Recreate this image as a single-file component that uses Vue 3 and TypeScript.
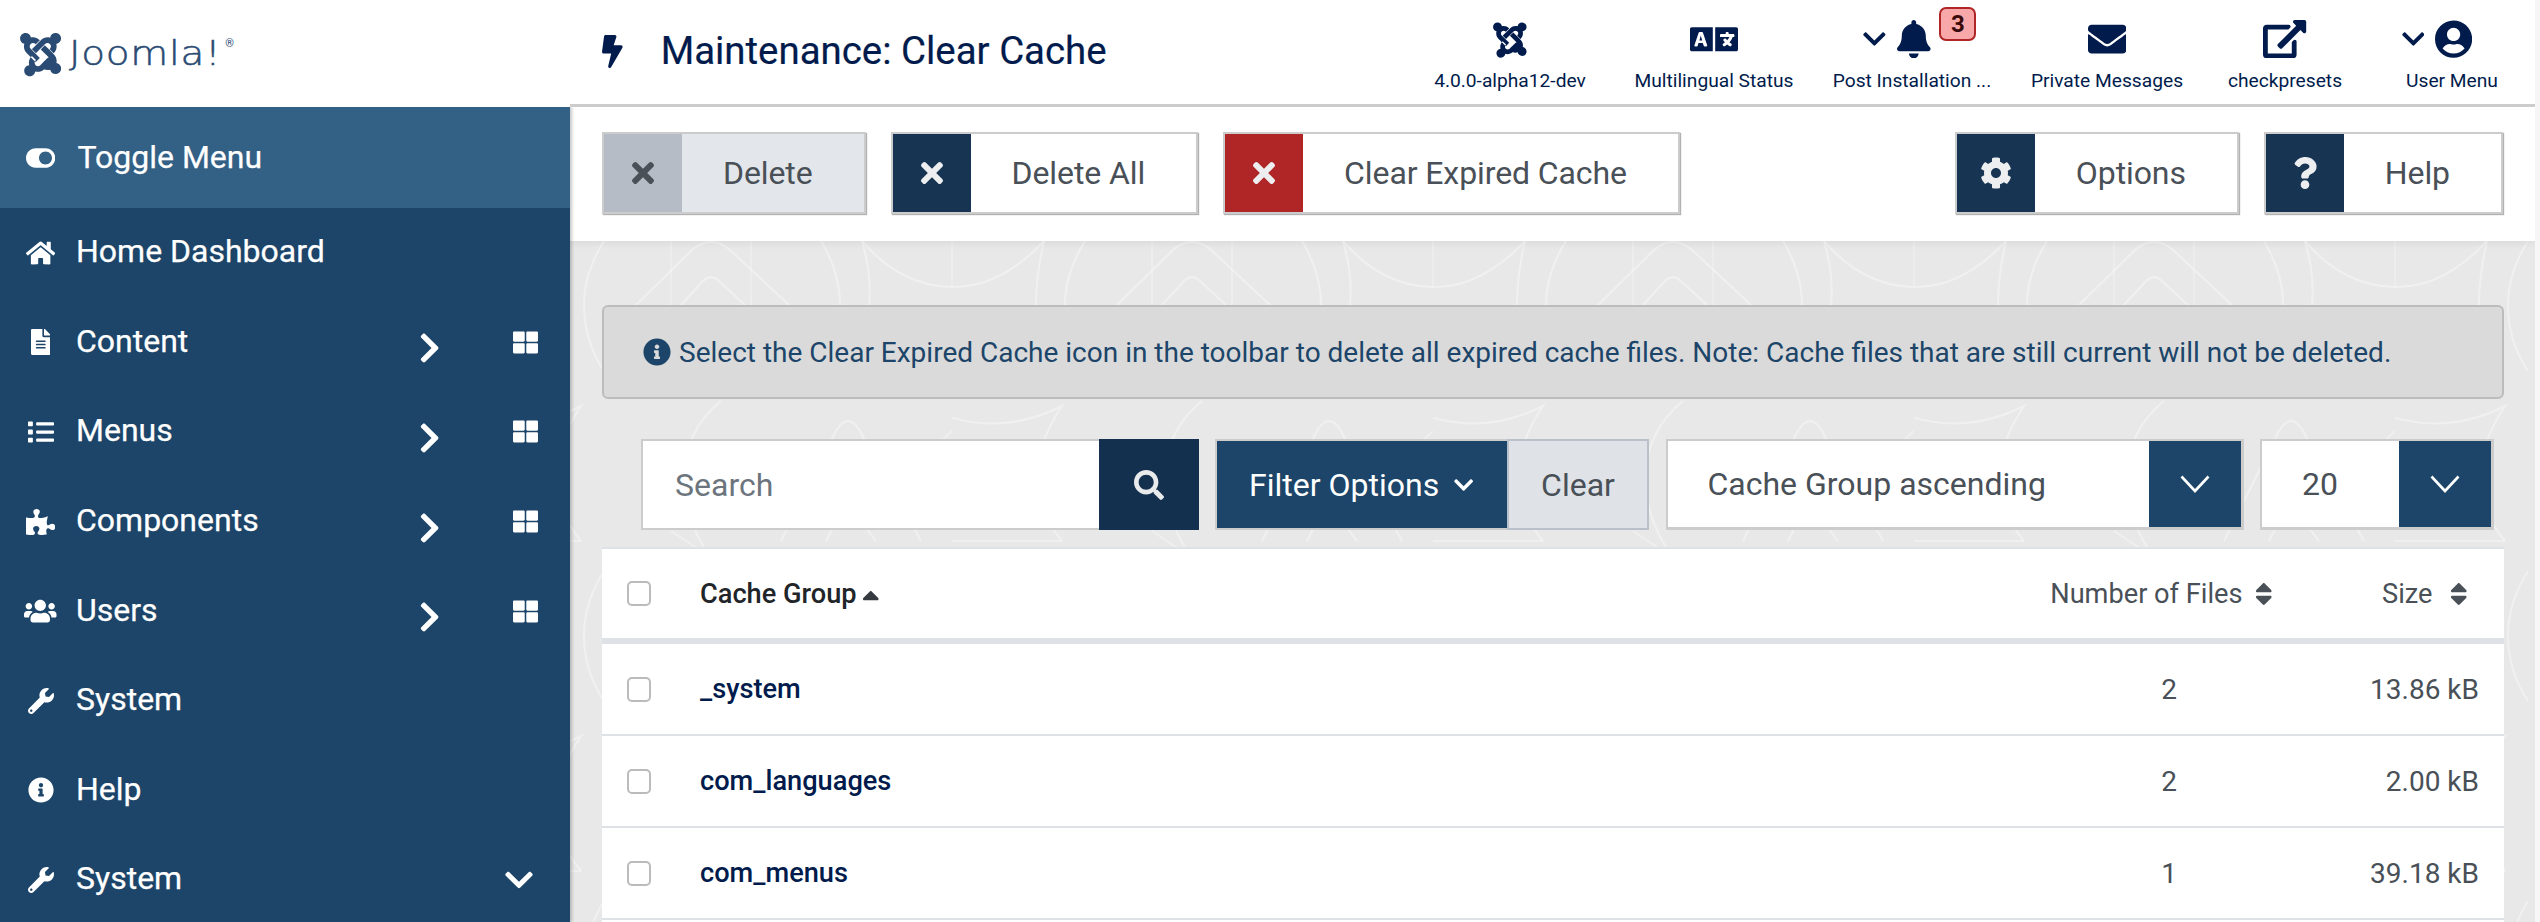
<script setup lang="ts">
type Icon = { vb: string; d: string }
const ic: Record<string, Icon> = {
  times: { vb: '0 0 352 512', d: 'M242.72 256l100.07-100.07c12.28-12.28 12.28-32.19 0-44.48l-22.24-22.24c-12.28-12.28-32.19-12.28-44.48 0L176 189.28 75.93 89.21c-12.28-12.28-32.19-12.28-44.48 0L9.21 111.45c-12.28 12.28-12.28 32.19 0 44.48L109.28 256 9.21 356.07c-12.28 12.28-12.28 32.19 0 44.48l22.24 22.24c12.28 12.28 32.2 12.28 44.48 0L176 322.72l100.07 100.07c12.28 12.28 32.2 12.28 44.48 0l22.24-22.24c12.28-12.28 12.28-32.19 0-44.48L242.72 256z' },
  bolt: { vb: '0 0 320 512', d: 'M296 160H180.6l42.6-129.8C227.2 15 215.7 0 200 0H56C44 0 33.8 8.9 32.2 20.8l-32 240C-1.7 275.2 9.5 288 24 288h118.7L96.6 482.5c-3.6 15.2 8 29.5 23.3 29.5 8.4 0 16.4-4.4 20.8-12l176-304c9.3-15.9-2.2-36-20.7-36z' },
  right: { vb: '0 0 320 512', d: 'M285.476 272.971L91.132 467.314c-9.373 9.373-24.569 9.373-33.941 0l-22.667-22.667c-9.357-9.357-9.375-24.522-.04-33.901L188.505 256 34.484 101.255c-9.335-9.379-9.317-24.544.04-33.901l22.667-22.667c9.373-9.373 24.569-9.373 33.941 0L285.475 239.03c9.373 9.372 9.373 24.568.001 33.941z' },
  down: { vb: '0 0 448 512', d: 'M207.029 381.476L12.686 187.132c-9.373-9.373-9.373-24.569 0-33.941l22.667-22.667c9.357-9.357 24.522-9.375 33.901-.04L224 284.505l154.745-154.021c9.379-9.335 24.544-9.317 33.901.04l22.667 22.667c9.373 9.373 9.373 24.569 0 33.941L240.971 381.476c-9.373 9.372-24.569 9.372-33.942 0z' },
  search: { vb: '0 0 512 512', d: 'M505 442.7L405.3 343c-4.5-4.5-10.6-7-17-7H372c27.6-35.3 44-79.7 44-128C416 93.1 322.9 0 208 0S0 93.1 0 208s93.1 208 208 208c48.3 0 92.7-16.4 128-44v16.3c0 6.4 2.5 12.5 7 17l99.7 99.7c9.4 9.4 24.6 9.4 33.9 0l28.3-28.3c9.4-9.4 9.4-24.6.1-34zM208 336c-70.7 0-128-57.2-128-128 0-70.7 57.2-128 128-128 70.7 0 128 57.2 128 128 0 70.7-57.2 128-128 128z' },
  home: { vb: '0 0 576 512', d: 'M280.37 148.26L96 300.11V464a16 16 0 0 0 16 16l112.06-.29a16 16 0 0 0 15.92-16V368a16 16 0 0 1 16-16h64a16 16 0 0 1 16 16v95.64a16 16 0 0 0 16 16.05L464 480a16 16 0 0 0 16-16V300L295.67 148.26a12.19 12.19 0 0 0-15.3 0zM571.6 251.47L488 182.56V44.05a12 12 0 0 0-12-12h-56a12 12 0 0 0-12 12v72.61L318.47 43a48 48 0 0 0-61 0L4.34 251.47a12 12 0 0 0-1.6 16.9l25.5 31A12 12 0 0 0 45.15 301l235.22-193.74a12.19 12.19 0 0 1 15.3 0L530.9 301a12 12 0 0 0 16.9-1.6l25.5-31a12 12 0 0 0-1.7-16.93z' },
  file: { vb: '0 0 384 512', d: 'M224 136V0H24C10.7 0 0 10.7 0 24v464c0 13.3 10.7 24 24 24h336c13.3 0 24-10.7 24-24V160H248c-13.2 0-24-10.8-24-24zm64 236c0 6.6-5.4 12-12 12H108c-6.6 0-12-5.4-12-12v-8c0-6.6 5.4-12 12-12h168c6.6 0 12 5.4 12 12v8zm0-64c0 6.6-5.4 12-12 12H108c-6.6 0-12-5.4-12-12v-8c0-6.6 5.4-12 12-12h168c6.6 0 12 5.4 12 12v8zm0-72v8c0 6.6-5.4 12-12 12H108c-6.6 0-12-5.4-12-12v-8c0-6.6 5.4-12 12-12h168c6.6 0 12 5.4 12 12zm96-114.1v6.1H256V0h6.1c6.4 0 12.5 2.5 17 7l97.9 98c4.5 4.5 7 10.6 7 16.9z' },
  list: { vb: '0 0 512 512', d: 'M80 368H16a16 16 0 0 0-16 16v64a16 16 0 0 0 16 16h64a16 16 0 0 0 16-16v-64a16 16 0 0 0-16-16zm0-320H16A16 16 0 0 0 0 64v64a16 16 0 0 0 16 16h64a16 16 0 0 0 16-16V64a16 16 0 0 0-16-16zm0 160H16a16 16 0 0 0-16 16v64a16 16 0 0 0 16 16h64a16 16 0 0 0 16-16v-64a16 16 0 0 0-16-16zm416 176H176a16 16 0 0 0-16 16v32a16 16 0 0 0 16 16h320a16 16 0 0 0 16-16v-32a16 16 0 0 0-16-16zm0-320H176a16 16 0 0 0-16 16v32a16 16 0 0 0 16 16h320a16 16 0 0 0 16-16V80a16 16 0 0 0-16-16zm0 160H176a16 16 0 0 0-16 16v32a16 16 0 0 0 16 16h320a16 16 0 0 0 16-16v-32a16 16 0 0 0-16-16z' },
  puzzle: { vb: '0 0 576 512', d: 'M519.442 288.651c-41.519 0-59.5 31.593-82.058 31.593C377.409 320.244 432 144 432 144s-196.288 80-196.288-3.297c0-35.827 36.288-46.25 36.288-85.985C272 19.216 243.885 0 210.539 0c-34.654 0-66.366 18.891-66.366 56.346 0 41.364 31.711 59.277 31.711 81.75C175.885 207.719 0 166.758 0 166.758v333.237s178.635 41.047 178.635-28.662c0-22.473-40-40.107-40-81.471 0-37.456 29.25-56.346 63.577-56.346 33.673 0 61.788 19.216 61.788 54.717 0 39.735-36.288 50.158-36.288 85.985 0 60.803 129.675 25.73 181.23 25.73 0 0-34.725-120.101 25.827-120.101 35.962 0 46.423 36.152 86.308 36.152C556.712 416 576 387.99 576 354.443c0-34.199-18.962-65.792-56.558-65.792z' },
  users: { vb: '0 0 640 512', d: 'M96 224c35.3 0 64-28.7 64-64s-28.7-64-64-64-64 28.7-64 64 28.7 64 64 64zm448 0c35.3 0 64-28.7 64-64s-28.7-64-64-64-64 28.7-64 64 28.7 64 64 64zm32 32h-64c-17.6 0-33.5 7.1-45.1 18.6 40.3 22.1 68.9 62 75.1 109.4h66c17.7 0 32-14.3 32-32v-32c0-35.3-28.7-64-64-64zm-256 0c61.9 0 112-50.1 112-112S381.9 32 320 32 208 82.1 208 144s50.1 112 112 112zm76.8 32h-8.3c-20.8 10-43.9 16-68.5 16s-47.6-6-68.5-16h-8.3C179.6 288 128 339.6 128 403.2V432c0 26.5 21.5 48 48 48h288c26.5 0 48-21.5 48-48v-28.8c0-63.6-51.6-115.2-115.2-115.2zm-223.7-13.4C161.5 263.1 145.6 256 128 256H64c-35.3 0-64 28.7-64 64v32c0 17.7 14.3 32 32 32h65.9c6.3-47.4 34.9-87.3 75.2-109.4z' },
  wrench: { vb: '0 0 512 512', d: 'M507.73 109.1c-2.24-9.03-13.54-12.09-20.12-5.51l-74.36 74.36-67.88-11.31-11.31-67.88 74.36-74.36c6.62-6.62 3.43-17.9-5.66-20.16-47.38-11.74-99.55.91-136.58 37.93-39.64 39.64-50.55 97.1-34.05 147.2L18.74 402.76c-24.99 24.99-24.99 65.51 0 90.5 24.99 24.99 65.51 24.99 90.5 0l213.21-213.21c50.12 16.71 107.47 5.68 147.37-34.22 37.07-37.07 49.7-89.32 37.91-136.73zM64 472c-13.25 0-24-10.75-24-24 0-13.26 10.75-24 24-24s24 10.74 24 24c0 13.25-10.75 24-24 24z' },
  info: { vb: '0 0 512 512', d: 'M256 8C119.043 8 8 119.083 8 256c0 136.997 111.043 248 248 248s248-111.003 248-248C504 119.083 392.957 8 256 8zm0 110c23.196 0 42 18.804 42 42s-18.804 42-42 42-42-18.804-42-42 18.804-42 42-42zm56 254c0 6.627-5.373 12-12 12h-88c-6.627 0-12-5.373-12-12v-24c0-6.627 5.373-12 12-12h12v-64h-12c-6.627 0-12-5.373-12-12v-24c0-6.627 5.373-12 12-12h64c6.627 0 12 5.373 12 12v100h12c6.627 0 12 5.373 12 12v24z' },
  cog: { vb: '0 0 512 512', d: 'M487.4 315.7l-42.6-24.6c4.3-23.2 4.3-47 0-70.2l42.6-24.6c4.9-2.8 7.1-8.6 5.5-14-11.1-35.6-30-67.8-54.7-94.6-3.8-4.1-10-5.1-14.8-2.3L380.8 110c-17.9-15.4-38.5-27.3-60.8-35.1V25.8c0-5.6-3.9-10.5-9.4-11.7-36.7-8.2-74.3-7.8-109.2 0-5.5 1.2-9.4 6.1-9.4 11.7V75c-22.2 7.9-42.8 19.8-60.8 35.1L88.7 85.5c-4.9-2.8-11-1.9-14.8 2.3-24.7 26.7-43.6 58.9-54.7 94.6-1.7 5.4.6 11.2 5.5 14L67.3 221c-4.3 23.2-4.3 47 0 70.2l-42.6 24.6c-4.9 2.8-7.1 8.6-5.5 14 11.1 35.6 30 67.8 54.7 94.6 3.8 4.1 10 5.1 14.8 2.3l42.6-24.6c17.9 15.4 38.5 27.3 60.8 35.1v49.2c0 5.6 3.9 10.5 9.4 11.7 36.7 8.2 74.3 7.8 109.2 0 5.5-1.2 9.4-6.1 9.4-11.7v-49.2c22.2-7.9 42.8-19.8 60.8-35.1l42.6 24.6c4.9 2.8 11 1.9 14.8-2.3 24.7-26.7 43.6-58.9 54.7-94.6 1.5-5.5-.7-11.3-5.6-14.1zM256 336c-44.1 0-80-35.9-80-80s35.9-80 80-80 80 35.9 80 80-35.9 80-80 80z' },
  question: { vb: '0 0 384 512', d: 'M202.021 0C122.202 0 70.503 32.703 29.914 91.026c-7.363 10.58-5.093 25.086 5.178 32.874l43.138 32.709c10.373 7.865 25.132 6.026 33.253-4.148 25.049-31.381 43.63-49.449 82.757-49.449 30.764 0 68.816 19.799 68.816 49.631 0 22.552-18.617 34.134-48.993 51.164-35.423 19.86-82.299 44.576-82.299 106.405V320c0 13.255 10.745 24 24 24h72.471c13.255 0 24-10.745 24-24v-5.773c0-42.86 125.268-44.645 125.268-160.627C377.504 66.256 286.902 0 202.021 0zM192 373.459c-38.196 0-69.271 31.075-69.271 69.271 0 38.195 31.075 69.27 69.271 69.27s69.271-31.075 69.271-69.271-31.075-69.27-69.271-69.27z' },
  bell: { vb: '0 0 448 512', d: 'M224 512c35.32 0 63.97-28.65 63.97-64H160.03c0 35.35 28.65 64 63.97 64zm215.39-149.71c-19.32-20.76-55.47-51.99-55.47-154.29 0-77.7-54.48-139.9-127.94-155.16V32c0-17.67-14.32-32-31.98-32s-31.98 14.33-31.98 32v20.84C118.56 68.1 64.08 130.3 64.08 208c0 102.3-36.15 133.53-55.47 154.29-6 6.45-8.66 14.16-8.61 21.71.11 16.4 12.98 32 32.1 32h383.8c19.12 0 32-15.6 32.1-32 .05-7.55-2.61-15.27-8.61-21.71z' },
  envelope: { vb: '0 0 512 512', d: 'M502.3 190.8c3.9-3.1 9.7-.2 9.7 4.7V400c0 26.5-21.5 48-48 48H48c-26.5 0-48-21.5-48-48V195.6c0-5 5.7-7.8 9.7-4.7 22.4 17.4 52.1 39.5 154.1 113.6 21.1 15.4 56.7 47.8 92.2 47.6 35.7.3 72-32.8 92.3-47.6 102-74.1 131.6-96.3 154-113.7zM256 320c23.2.4 56.6-29.2 73.4-41.4 132.7-96.3 142.8-104.7 173.4-128.7 5.8-4.5 9.2-11.5 9.2-18.9v-19c0-26.5-21.5-48-48-48H48C21.5 64 0 85.5 0 112v19c0 7.4 3.4 14.3 9.2 18.9 30.6 23.9 40.7 32.4 173.4 128.7 16.8 12.2 50.2 41.8 73.4 41.4z' },
  external: { vb: '0 0 576 512', d: 'M576 24v127.984c0 21.461-25.96 31.98-40.971 16.971l-35.707-35.709-243.523 243.523c-9.373 9.373-24.568 9.373-33.941 0l-22.627-22.627c-9.373-9.373-9.373-24.569 0-33.941L442.756 76.676l-35.703-35.705C391.982 25.9 402.656 0 424.024 0H552c13.255 0 24 10.745 24 24zM407.029 270.794l-16 16A23.999 23.999 0 0 0 384 303.765V448H64V128h264a24.003 24.003 0 0 0 16.97-7.029l16-16C376.089 89.851 365.381 64 344 64H48C21.49 64 0 85.49 0 112v352c0 26.51 21.49 48 48 48h352c26.51 0 48-21.49 48-48V287.764c0-21.382-25.852-32.09-40.971-16.97z' },
  user: { vb: '0 0 496 512', d: 'M248 8C111 8 0 119 0 256s111 248 248 248 248-111 248-248S385 8 248 8zm0 96c48.6 0 88 39.4 88 88s-39.4 88-88 88-88-39.4-88-88 39.4-88 88-88zm0 344c-58.7 0-111.3-26.6-146.5-68.2 18.8-35.4 55.6-59.8 98.5-59.8 2.4 0 4.8.4 7.1 1.1 13 4.2 26.6 6.9 40.9 6.9 14.3 0 28-2.7 40.9-6.9 2.3-.7 4.7-1.1 7.1-1.1 42.9 0 79.7 24.4 98.5 59.8C359.3 421.4 306.7 448 248 448z' },
  language: { vb: '0 0 640 512', d: 'M152.1 236.2c-3.5-12.1-7.8-33.2-7.8-33.2h-.5s-4.3 21.1-7.8 33.2l-11.1 37.5H163zM616 96H336v320h280c13.3 0 24-10.7 24-24V120c0-13.3-10.7-24-24-24zm-24 120c0 6.6-5.4 12-12 12h-11.4c-6.9 23.6-21.7 47.4-42.7 69.9 8.4 6.4 17.1 12.5 26.1 18 5.5 3.4 7.3 10.5 4.1 16.2l-7.9 13.9c-3.4 5.9-10.9 7.8-16.7 4.3-12.6-7.8-24.5-16.1-35.4-24.9-10.9 8.7-22.7 17.1-35.4 24.9-5.8 3.5-13.3 1.6-16.7-4.3l-7.9-13.9c-3.2-5.6-1.4-12.8 4.2-16.2 9.3-5.7 18-11.7 26.1-18-7.9-8.4-14.9-17-21-25.7-4-5.7-2.2-13.6 3.7-17.1l6.5-3.9 7.3-4.3c5.4-3.2 12.4-1.7 16 3.4 5 7 10.8 14 17.4 20.9 13.5-14.2 23.8-28.9 30-43.2H412c-6.6 0-12-5.4-12-12v-16c0-6.6 5.4-12 12-12h64v-16c0-6.6 5.4-12 12-12h16c6.6 0 12 5.4 12 12v16h64c6.6 0 12 5.4 12 12zM0 120v272c0 13.3 10.7 24 24 24h280V96H24c-13.3 0-24 10.7-24 24zm58.9 216.1L116.4 167c1.7-4.9 6.2-8.1 11.4-8.1h32.5c5.1 0 9.7 3.3 11.4 8.1l57.5 169.1c2.6 7.8-3.1 15.9-11.4 15.9h-22.9a12 12 0 0 1-11.5-8.6L170.1 308h-57.9l-9.4 35.4c-1.4 5.2-6.1 8.6-11.5 8.6H69.9c-8.2 0-14-8-11-15.9z' },
  sort: { vb: '0 0 320 512', d: 'M41 288h238c21.4 0 32.1 25.9 17 41L177 448c-9.4 9.4-24.6 9.4-33.9 0L24 329c-15.1-15.1-4.4-41 17-41zm255-105L177 64c-9.4-9.4-24.6-9.4-33.9 0L24 183c-15.1 15.1-4.4 41 17 41h238c21.4 0 32.1-25.9 17-41z' },
  sortUp: { vb: '0 0 320 512', d: 'M279 224H41c-21.4 0-32.1-25.9-17-41L143 64c9.4-9.4 24.6-9.4 33.9 0l119 119c15.2 15.1 4.5 41-16.9 41z' },
  toggle: { vb: '0 0 576 512', d: 'M384 64H192C86 64 0 150 0 256s86 192 192 192h192c106 0 192-86 192-192S490 64 384 64zm0 320c-70.8 0-128-57.3-128-128 0-70.8 57.3-128 128-128 70.8 0 128 57.3 128 128 0 70.8-57.3 128-128 128z' },
  grid: { vb: '0 0 512 512', d: 'M296 32h192c13.255 0 24 10.745 24 24v160c0 13.255-10.745 24-24 24H296c-13.255 0-24-10.745-24-24V56c0-13.255 10.745-24 24-24zm-80 0H24C10.745 32 0 42.745 0 56v160c0 13.255 10.745 24 24 24h192c13.255 0 24-10.745 24-24V56c0-13.255-10.745-24-24-24zM0 296v160c0 13.255 10.745 24 24 24h192c13.255 0 24-10.745 24-24V296c0-13.255-10.745-24-24-24H24c-13.255 0-24 10.745-24 24zm296 184h192c13.255 0 24-10.745 24-24V296c0-13.255-10.745-24-24-24H296c-13.255 0-24 10.745-24 24v160c0 13.255 10.745 24 24 24z' },
  joomla: { vb: '0 0 448 512', d: 'M.6 92.1C.6 58.8 27.4 32 60.4 32c30 0 54.5 21.9 59.2 50.2 32.6-7.6 67.1.6 96.5 30l-44.3 44.3c-20.5-20.5-42.6-16.3-55.4-3.5-14.3 14.3-14.3 37.9 0 52.2l99.5 99.5-44 44.3c-87.7-87.2-49.7-49.7-99.8-99.7-26.8-26.5-35-64.8-24.8-98.9C20.4 144.6.6 120.7.6 92.1zm129.5 116.4l44.3 44.3c10-10 89.7-89.7 99.7-99.8 14.3-14.3 37.6-14.3 51.9 0 12.8 12.8 17 35-3.5 55.4l44 44.3c31.2-31.2 38.5-67.6 28.9-101.2 29.2-4.1 51.9-29.2 51.9-59.5 0-33.2-26.8-60.1-59.8-60.1-30.3 0-55.4 22.5-59.5 51.6-33.8-9.9-71.7-1.5-98.3 25.1-18.3 19.1-71.1 71.5-99.6 99.9zm266.3 152.2c8.2-32.7-.9-68.5-26.3-93.9-11.8-12.2 5 4.7-99.5-99.7l-44.3 44.3 99.7 99.7c14.3 14.3 14.3 37.6 0 51.9-12.8 12.8-35 17-55.4-3.5l-44 44.3c27.6 30.2 68 38.8 102.7 28 5.5 27.4 29.7 48 58.9 48 33 0 59.8-26.8 59.8-60.1 0-30.2-22.5-55-51.6-58.9zm-74.5-77.2c-10.1 10.1-89.7 89.7-99.7 99.7-14.3 14.3-37.6 14.3-51.9 0-13-13-16.9-35.2 3.5-55.4l-44.3-44.3c-29.7 29.7-38.7 66.3-28.9 100.8-30.6 2.6-54.8 28.1-54.8 59.5 0 33.2 26.8 60.1 59.8 60.1 30.5 0 55.8-22.9 59.5-52.4 33.8 9.4 71.3 1.2 98.1-25.1 18.7-18.7 71.1-71.5 99.6-99.9l-44.6-44.3z' }
}

const navItems = [
  { label: 'Home Dashboard', icon: 'home', extra: '' },
  { label: 'Content', icon: 'file', extra: 'sub' },
  { label: 'Menus', icon: 'list', extra: 'sub' },
  { label: 'Components', icon: 'puzzle', extra: 'sub' },
  { label: 'Users', icon: 'users', extra: 'sub' },
  { label: 'System', icon: 'wrench', extra: '' },
  { label: 'Help', icon: 'info', extra: '' },
  { label: 'System', icon: 'wrench', extra: 'down' }
]

const headerItems = [
  { label: '4.0.0-alpha12-dev', icon: 'joomla', w: 198 },
  { label: 'Multilingual Status', icon: 'language', w: 210 },
  { label: 'Post Installation ...', icon: 'bell', w: 186, chevron: true, badge: '3' },
  { label: 'Private Messages', icon: 'envelope', w: 204 },
  { label: 'checkpresets', icon: 'external', w: 152 },
  { label: 'User Menu', icon: 'user', w: 174, chevron: true, last: true }
]

const rows = [
  { name: '_system', files: 2, size: '13.86 kB' },
  { name: 'com_languages', files: 2, size: '2.00 kB' },
  { name: 'com_menus', files: 1, size: '39.18 kB' }
]
</script>

<template>
  <div class="app">
    <header class="header">
      <div class="brand">
        <svg class="i brand-mark" :viewBox="ic.joomla.vb"><path :d="ic.joomla.d" /></svg>
        <span class="brand-word">Joomla!</span><span class="brand-reg">®</span>
      </div>
      <div class="title-wrap">
        <svg class="i title-icon" :viewBox="ic.bolt.vb"><path :d="ic.bolt.d" /></svg>
        <h1 class="title">Maintenance: Clear Cache</h1>
      </div>
      <nav class="head-items">
        <div v-for="it in headerItems" :key="it.label" class="head-item" :class="{ 'head-last': it.last }" :style="{ width: it.w + 'px' }">
          <div class="head-icon" :class="{ 'head-icon-chev': it.chevron }">
            <svg v-if="it.chevron" class="i head-chev" :viewBox="ic.down.vb"><path :d="ic.down.d" /></svg>
            <svg class="i" :viewBox="ic[it.icon].vb"><path :d="ic[it.icon].d" /></svg>
            <span v-if="it.badge" class="badge">{{ it.badge }}</span>
          </div>
          <span class="head-label">{{ it.label }}</span>
        </div>
      </nav>
    </header>

    <div class="body">
      <aside class="sidebar">
        <div class="toggle">
          <span class="nav-ico toggle-ico"><svg class="i" :viewBox="ic.toggle.vb"><path :d="ic.toggle.d" /></svg></span>
          <span class="toggle-text">Toggle Menu</span>
        </div>
        <div v-for="(n, idx) in navItems" :key="idx" class="nav-row">
          <span class="nav-ico"><svg class="i" :viewBox="ic[n.icon].vb"><path :d="ic[n.icon].d" /></svg></span>
          <span class="nav-text">{{ n.label }}</span>
          <template v-if="n.extra === 'sub'">
            <svg class="i nav-chev" :viewBox="ic.right.vb"><path :d="ic.right.d" /></svg>
            <svg class="i nav-grid" :viewBox="ic.grid.vb"><path :d="ic.grid.d" /></svg>
          </template>
          <svg v-if="n.extra === 'down'" class="i nav-down" :viewBox="ic.down.vb"><path :d="ic.down.d" /></svg>
        </div>
      </aside>

      <main class="main">
        <div class="toolbar">
          <button class="tbtn tbtn-disabled"><span class="tbtn-ico"><svg class="i" :viewBox="ic.times.vb"><path :d="ic.times.d" /></svg></span><span class="tbtn-text">Delete</span></button>
          <button class="tbtn"><span class="tbtn-ico"><svg class="i" :viewBox="ic.times.vb"><path :d="ic.times.d" /></svg></span><span class="tbtn-text">Delete All</span></button>
          <button class="tbtn tbtn-danger"><span class="tbtn-ico"><svg class="i" :viewBox="ic.times.vb"><path :d="ic.times.d" /></svg></span><span class="tbtn-text">Clear Expired Cache</span></button>
          <button class="tbtn tbtn-push"><span class="tbtn-ico"><svg class="i" :viewBox="ic.cog.vb"><path :d="ic.cog.d" /></svg></span><span class="tbtn-text">Options</span></button>
          <button class="tbtn"><span class="tbtn-ico"><svg class="i" :viewBox="ic.question.vb"><path :d="ic.question.d" /></svg></span><span class="tbtn-text">Help</span></button>
        </div>

        <div class="content">
          <svg class="watermark" width="100%" height="100%" aria-hidden="true">
            <defs>
              <pattern id="jpat" x="-99" y="0" width="481" height="330" patternUnits="userSpaceOnUse">
                <g fill="none" stroke="#fff" stroke-opacity=".36" stroke-width="2">
                  <path d="M165 64L222 8Q240 -6 258 8L318 64M210 64L232 40Q240 32 248 40L274 64" />
                  <path d="M133 0Q113 32 113 64Q113 100 133 130M350 0Q369 32 369 64Q369 100 350 130" />
                  <path d="M391 0Q430 46 483 46Q530 46 573 0M-90 0Q-50 46 2 46Q49 46 92 0" />
                  <path d="M391 0Q401 34 398 64Q398 100 391 130M92 0Q84 34 84 64Q84 100 92 130" />
                  <path d="M200 0V64M280 0V64M0 0V46M481 0V46" stroke-opacity=".2" />
                  <path d="M310 300L360 200Q377 160 394 200L450 300M355 300L368 275Q377 255 386 275L405 300" />
                  <path d="M-30 165Q40 200 110 165Q60 240 110 300M250 160C200 200 200 270 250 330" />
                  <path d="M0 300H110M200 290L260 330M430 240Q470 200 481 190" stroke-opacity=".3" />
                </g>
              </pattern>
            </defs>
            <rect width="100%" height="100%" fill="url(#jpat)" />
          </svg>
          <div class="content-inner">
            <div class="alert">
              <svg class="i alert-ico" :viewBox="ic.info.vb"><path :d="ic.info.d" /></svg>
              <span>Select the Clear Expired Cache icon in the toolbar to delete all expired cache files. Note: Cache files that are still current will not be deleted.</span>
            </div>

            <div class="filters">
              <div class="search">
                <div class="search-input">Search</div>
                <div class="search-btn"><svg class="i" :viewBox="ic.search.vb"><path :d="ic.search.d" /></svg></div>
              </div>
              <div class="filter-group">
                <div class="filter-opt">Filter Options<svg class="i filter-chev" :viewBox="ic.down.vb"><path :d="ic.down.d" /></svg></div>
                <div class="filter-clear">Clear</div>
              </div>
              <div class="select select-sort">
                <span class="select-text">Cache Group ascending</span>
                <span class="select-btn"><svg width="30" height="18" viewBox="0 0 30 18"><path d="M1.5 1.5L15 16L28.5 1.5" fill="none" stroke="#fff" stroke-width="2.6" /></svg></span>
              </div>
              <div class="select select-limit">
                <span class="select-text limit-text">20</span>
                <span class="select-btn"><svg width="30" height="18" viewBox="0 0 30 18"><path d="M1.5 1.5L15 16L28.5 1.5" fill="none" stroke="#fff" stroke-width="2.6" /></svg></span>
              </div>
            </div>

            <div class="table">
              <div class="thead trow">
                <span class="cell-check"><span class="check"></span></span>
                <span class="th-name">Cache Group<svg class="i th-caret" :viewBox="ic.sortUp.vb"><path :d="ic.sortUp.d" /></svg></span>
                <span class="th-files">Number of Files<svg class="i th-sort" :viewBox="ic.sort.vb"><path :d="ic.sort.d" /></svg></span>
                <span class="th-size">Size<svg class="i th-sort th-sort-size" :viewBox="ic.sort.vb"><path :d="ic.sort.d" /></svg></span>
              </div>
              <div v-for="r in rows" :key="r.name" class="trow tbody-row">
                <span class="cell-check"><span class="check"></span></span>
                <span class="td-name">{{ r.name }}</span>
                <span class="td-files">{{ r.files }}</span>
                <span class="td-size">{{ r.size }}</span>
              </div>
            </div>
          </div>
        </div>
      </main>
    </div>
  </div>
</template>

<style>
html, body { margin: 0; background: #f6f6f6; overflow: hidden; }
</style>

<style scoped>
* { box-sizing: border-box; }
.i { height: 1em; width: auto; fill: currentColor; display: block; flex: none; }
.app {
  width: 2535px;
  height: 922px;
  display: flex;
  flex-direction: column;
  overflow: hidden;
  font-family: Roboto, "Liberation Sans", sans-serif;
  background: #fff;
}
.header { height: 107px; display: flex; align-items: stretch; background: #fff; flex: none; position: relative; z-index: 3; }
.brand { width: 570px; flex: none; display: flex; align-items: center; padding-left: 20px; color: #2a4b73; }
.brand-mark { font-size: 47px; }
.brand-word {
  font-family: "DejaVu Sans", sans-serif;
  font-weight: 200;
  font-size: 33px;
  margin-left: 8px;
  margin-right: 27px;
  letter-spacing: .6px;
  line-height: 1;
  -webkit-text-stroke: .5px #2a4b73;
  transform: scaleX(1.18);
  transform-origin: left center;
}
.brand-reg { font-size: 11px; align-self: flex-start; margin-top: 37px; }
.title-wrap {
  flex: 1;
  display: flex;
  align-items: center;
  padding-left: 32px;
  padding-bottom: 1px;
  color: #001b4c;
  border-bottom: 3px solid #ccc;
}
.title-icon { font-size: 33px; margin-right: 38px; }
.title { margin: 0; font-weight: 400; font-size: 38.4px; line-height: 1; -webkit-text-stroke: .2px #001b4c; }
.head-items { display: flex; flex: none; border-bottom: 3px solid #ccc; color: #001b4c; }
.head-item { display: flex; flex-direction: column; align-items: center; padding-top: 20px; }
.head-last { padding-left: 8px; }
.head-icon { height: 38px; font-size: 38.4px; display: flex; align-items: center; position: relative; }
.head-icon-chev { padding-right: 30px; }
.head-chev { font-size: 26px; margin-right: 11px; }
.head-label { font-size: 19.2px; line-height: 24px; margin-top: 11px; white-space: nowrap; }
.badge {
  position: absolute;
  left: 76px;
  top: -13px;
  width: 37px;
  height: 34px;
  border: 2px solid #b02525;
  border-radius: 7px;
  background: #f8a8a8;
  color: #3b0a0a;
  font-size: 24px;
  font-weight: 700;
  text-align: center;
  line-height: 30px;
}
.body { flex: 1; display: flex; min-height: 0; }
.sidebar {
  width: 570px;
  flex: none;
  background: #1c4569;
  color: #fff;
  font-size: 32px;
  box-shadow: 2px 0 3px rgba(0, 0, 0, .22);
  position: relative;
  z-index: 2;
  -webkit-text-stroke: .25px #fff;
}
.toggle { height: 101px; background: #336085; display: flex; align-items: center; padding-left: 24.5px; }
.toggle-text { margin-left: 21px; padding-bottom: 1px; }
.toggle-ico { font-size: 28px; }
.nav-ico { width: 32px; flex: none; display: flex; justify-content: center; font-size: 26px; }
.nav-row { height: 89.6px; display: flex; align-items: center; padding-left: 24.5px; }
.nav-text { margin-left: 19.5px; flex: 1; padding-bottom: 3px; }
.nav-chev { font-size: 34px; margin-top: 12px; }
.nav-grid { font-size: 25px; margin-left: 73px; margin-right: 32px; }
.nav-down { font-size: 32px; margin-right: 37px; }
.main { flex: 1; display: flex; flex-direction: column; min-width: 0; }
.toolbar {
  height: 134px;
  flex: none;
  background: #fff;
  display: flex;
  align-items: flex-start;
  gap: 25px;
  padding: 25px 32px 0;
  position: relative;
  z-index: 1;
  box-shadow: 0 2px 8px rgba(0, 0, 0, .07);
}
.tbtn {
  height: 82px;
  display: flex;
  align-items: stretch;
  padding: 0;
  border: 2px solid #ccc;
  background: #fff;
  color: #495057;
  font: inherit;
  font-size: 32px;
  letter-spacing: -.1px;
  box-shadow: 1px 1px 1px rgba(0, 0, 0, .3);
}
.tbtn-ico { width: 78px; display: flex; align-items: center; justify-content: center; background: #173452; color: #eceef0; font-size: 32px; }
.tbtn-text { display: flex; align-items: center; padding: 0 51px 0 41px; }
.tbtn-disabled { background: #e3e6ea; }
.tbtn-disabled .tbtn-ico { background: #b5bcc5; color: #495057; }
.tbtn-danger .tbtn-ico { background: #b02525; }
.tbtn-push { margin-left: auto; }
.content { flex: 1; position: relative; background: #e8e8e8; min-height: 0; }
.watermark { position: absolute; inset: 0; }
.content-inner { position: relative; height: 100%; padding: 64px 31px 0 32px; display: flex; flex-direction: column; }
.alert {
  height: 94px;
  flex: none;
  display: flex;
  align-items: center;
  gap: 8px;
  padding-left: 39px;
  background: #dadada;
  border: 2px solid #bcbcbc;
  border-radius: 6px;
  color: #1c4569;
  font-size: 28px;
  white-space: nowrap;
}
.alert-ico { font-size: 28px; }
.filters { display: flex; margin: 40px 10px 0 39px; gap: 16.5px; height: 91px; flex: none; color: #495057; font-size: 32px; }
.search { width: 557.5px; display: flex; flex: none; }
.search-input { flex: 1; background: #fff; border: 2px solid #ccc; border-right: 0; color: #6c757d; display: flex; align-items: center; padding-left: 32px; }
.search-btn { width: 100px; background: #14304f; color: #e8eaec; display: flex; align-items: center; justify-content: center; font-size: 30px; }
.filter-group { display: flex; flex: none; width: 434px; }
.filter-opt { width: 292px; background: #1c4569; color: #fff; border: 2px solid #ccc; border-right: 0; display: flex; align-items: center; padding-left: 32px; }
.filter-chev { font-size: 22px; margin-left: 15px; }
.filter-clear { flex: 1; background: #dfe3e8; border: 2px solid #b9c0c9; display: flex; align-items: center; justify-content: center; }
.select { display: flex; flex: none; background: #fff; border: 2px solid #ccc; border-right-width: 3px; border-bottom-width: 3px; }
.select-sort { width: 578px; }
.select-limit { width: 234px; }
.select-text { flex: 1; display: flex; align-items: center; padding-left: 40px; }
.limit-text { padding-left: 40px; }
.select-btn { width: 92px; background: #1c4569; display: flex; align-items: center; justify-content: center; }
.table { flex: 1; margin-top: 17px; background: #fff; border-top: 2px solid #dee2e6; font-size: 27.2px; color: #495057; }
.trow { display: grid; grid-template-columns: 98px 1fr 258px 206px; align-items: center; }
.thead { height: 95px; border-bottom: 6px solid #dee2e6; }
.tbody-row { height: 92px; border-bottom: 2px solid #dee2e6; }
.cell-check { display: flex; padding-left: 25px; }
.check { width: 24px; height: 25px; border: 2px solid #bbb; border-radius: 5px; background: #fff; }
.th-name { display: flex; align-items: center; color: #212529; font-weight: 500; }
.th-caret { font-size: 28px; margin-left: 5px; margin-top: 16px; color: #343a40; }
.th-files { display: flex; justify-content: flex-end; align-items: center; padding-right: 26px; }
.th-size { display: flex; justify-content: flex-end; align-items: center; padding-right: 37px; }
.th-sort { font-size: 28px; margin-left: 12px; }
.th-sort-size { margin-left: 17px; }
.td-name { color: #001b4c; font-weight: 500; }
.td-files { text-align: center; font-size: 28px; }
.td-size { text-align: right; padding-right: 25px; font-size: 28px; }
</style>
